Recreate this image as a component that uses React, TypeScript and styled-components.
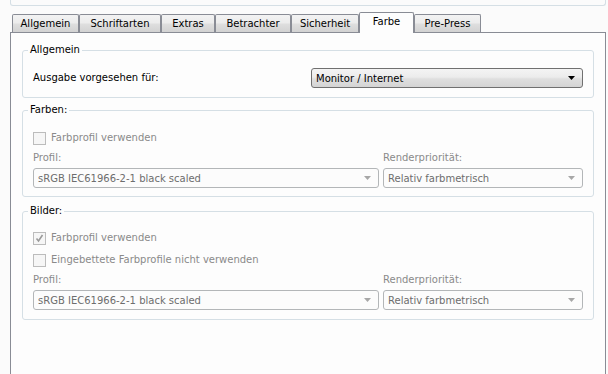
import React from "react";
import styled, { createGlobalStyle, css } from "styled-components";

const GlobalStyle = createGlobalStyle`
  html, body {
    margin: 0;
    padding: 0;
    background: #fbfbfb;
    overflow: hidden;
  }
  body {
    font-family: "DejaVu Sans", "Liberation Sans", sans-serif;
    font-size: 10px;
    color: #000;
  }
`;

const Window = styled.div`
  width: 608px;
  height: 374px;
  box-sizing: border-box;
  padding: 0 2px 0 10px;
  display: flex;
  flex-direction: column;
  overflow: hidden;
`;

const TopGroupStub = styled.div`
  flex-shrink: 0;
  height: 5px;
  border: 1px solid #d5dfe5;
  border-top: none;
  border-radius: 0 0 3px 3px;
`;

const TabStrip = styled.div`
  flex-shrink: 0;
  margin-top: 6px;
  height: 20px;
  padding-left: 2px;
  display: flex;
  align-items: flex-end;
  position: relative;
  z-index: 1;
`;

const Tab = styled.div<{ $w: number; $active?: boolean }>`
  box-sizing: border-box;
  width: ${(p) => p.$w}px;
  height: 18px;
  border: 1px solid #898c95;
  border-bottom: none;
  border-radius: 2px 2px 0 0;
  background: linear-gradient(#f3f3f3 0%, #ececec 45%, #dedede 55%, #d2d2d2 100%);
  display: flex;
  align-items: center;
  justify-content: center;
  padding-bottom: 1px;
  white-space: nowrap;
  ${(p) =>
    p.$active &&
    css`
      height: 21px;
      margin-bottom: -1px;
      background: #fdfdfd;
      padding-bottom: 4px;
    `}
`;

const Panel = styled.div`
  flex-shrink: 0;
  height: 360px;
  border: 1px solid #898c95;
  background: #fdfdfd;
  padding: 10px 11px 0 11px;
  display: flex;
  flex-direction: column;
`;

const Group = styled.fieldset<{ $mt?: number }>`
  margin: ${(p) => p.$mt ?? 0}px 0 0 0;
  padding: 0;
  border: 1px solid #d5dfe5;
  border-radius: 3px;
  min-width: 0;
`;

const GroupTitle = styled.legend`
  margin-left: 5px;
  padding: 0 2px;
  line-height: 14px;
  color: #000;
`;

const GroupBody = styled.div<{ $pt: number; $pb: number }>`
  padding: ${(p) => p.$pt}px 10px ${(p) => p.$pb}px 10px;
  display: flex;
  flex-direction: column;
`;

const OutputRow = styled.div`
  display: grid;
  grid-template-columns: 1fr 272px;
  align-items: center;
`;

const Label = styled.span<{ $disabled?: boolean }>`
  color: ${(p) => (p.$disabled ? "#8a8a8a" : "#000")};
  line-height: 14px;
  white-space: nowrap;
`;

const ProfileGrid = styled.div`
  display: grid;
  grid-template-columns: 346px 200px;
  column-gap: 4px;
`;

const FieldLabel = styled(Label)`
  margin: 2px 0 3px 0;
`;

const Combo = styled.div<{ $disabled?: boolean }>`
  box-sizing: border-box;
  height: 20px;
  border-radius: 3px;
  display: flex;
  align-items: center;
  padding: 0 7px 0 4px;
  white-space: nowrap;
  ${(p) =>
    p.$disabled
      ? css`
          border: 1px solid #b3b6b8;
          background: #fcfcfc;
          color: #6d6d6d;
        `
      : css`
          border: 1px solid #707070;
          background: linear-gradient(#f4f4f4 0%, #ececec 45%, #dfdfdf 55%, #d4d4d4 100%);
          color: #000;
        `}
`;

const ComboText = styled.span`
  flex: 1;
  overflow: hidden;
`;

const CheckRow = styled.div`
  height: 22px;
  display: flex;
  align-items: center;
  gap: 5px;
`;

const CheckBox = styled.div`
  box-sizing: border-box;
  width: 13px;
  height: 13px;
  border: 1px solid #bcbcbc;
  background: #f6f6f6;
  display: flex;
  align-items: center;
  justify-content: center;
`;

const Arrow = ({ color }: { color: string }) => (
  <svg width="7" height="4" viewBox="0 0 7 4">
    <path d="M0 0h7L3.5 4z" fill={color} />
  </svg>
);

const Check = () => (
  <svg width="9" height="9" viewBox="0 0 9 9">
    <path d="M1.5 4.5l2 2.5 4-6" stroke="#9a9a9a" strokeWidth="1.6" fill="none" />
  </svg>
);

const ComboBox = ({ value, disabled }: { value: string; disabled?: boolean }) => (
  <Combo $disabled={disabled}>
    <ComboText>{value}</ComboText>
    <Arrow color={disabled ? "#a7a7a7" : "#000"} />
  </Combo>
);

const CheckItem = ({ label, checked }: { label: string; checked?: boolean }) => (
  <CheckRow>
    <CheckBox>{checked && <Check />}</CheckBox>
    <Label $disabled>{label}</Label>
  </CheckRow>
);

const ProfileFields = () => (
  <ProfileGrid>
    <FieldLabel $disabled>Profil:</FieldLabel>
    <FieldLabel $disabled>Renderpriorität:</FieldLabel>
    <ComboBox disabled value="sRGB IEC61966-2-1 black scaled" />
    <ComboBox disabled value="Relativ farbmetrisch" />
  </ProfileGrid>
);

const tabs: { label: string; w: number; active?: boolean }[] = [
  { label: "Allgemein", w: 67 },
  { label: "Schriftarten", w: 82 },
  { label: "Extras", w: 54 },
  { label: "Betrachter", w: 76 },
  { label: "Sicherheit", w: 68 },
  { label: "Farbe", w: 55, active: true },
  { label: "Pre-Press", w: 67 },
];

export default function App() {
  return (
    <>
      <GlobalStyle />
      <Window>
        <TopGroupStub />
        <TabStrip>
          {tabs.map((t) => (
            <Tab key={t.label} $w={t.w} $active={t.active}>
              {t.label}
            </Tab>
          ))}
        </TabStrip>
        <Panel>
          <Group>
            <GroupTitle>Allgemein</GroupTitle>
            <GroupBody $pt={11} $pb={9}>
              <OutputRow>
                <Label>Ausgabe vorgesehen für:</Label>
                <ComboBox value="Monitor / Internet" />
              </OutputRow>
            </GroupBody>
          </Group>
          <Group $mt={5}>
            <GroupTitle>Farben:</GroupTitle>
            <GroupBody $pt={10} $pb={8}>
              <CheckItem label="Farbprofil verwenden" />
              <ProfileFields />
            </GroupBody>
          </Group>
          <Group $mt={7}>
            <GroupTitle>Bilder:</GroupTitle>
            <GroupBody $pt={9} $pb={9}>
              <CheckItem label="Farbprofil verwenden" checked />
              <CheckItem label="Eingebettete Farbprofile nicht verwenden" />
              <ProfileFields />
            </GroupBody>
          </Group>
        </Panel>
      </Window>
    </>
  );
}
